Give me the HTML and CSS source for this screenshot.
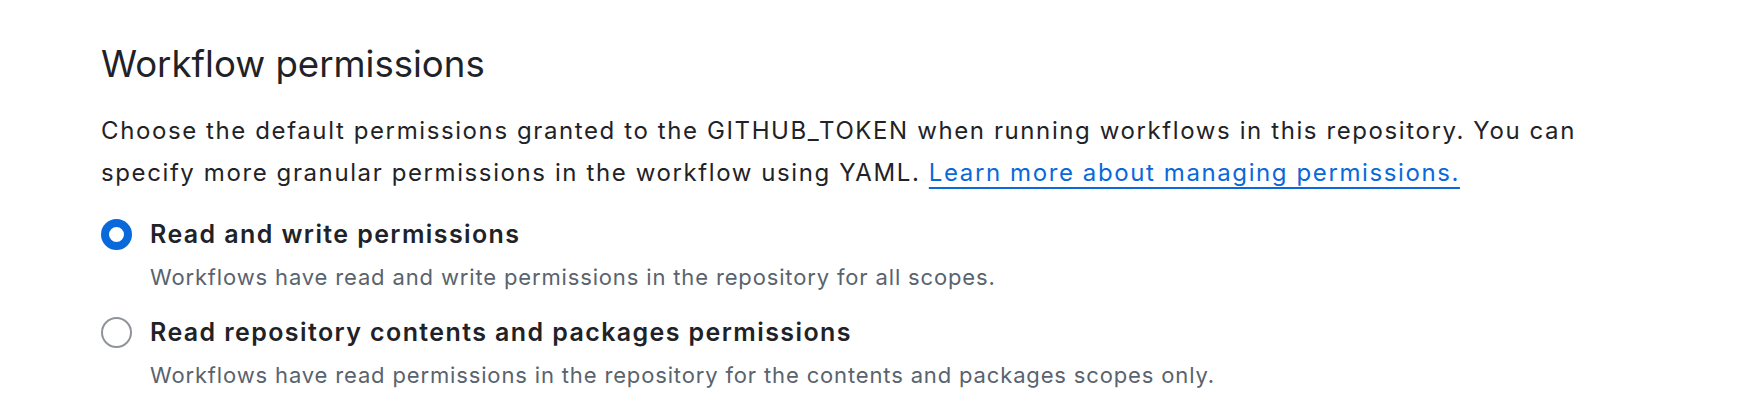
FILE: index.html
```html
<!DOCTYPE html>
<html lang="en">
<head>
<meta charset="utf-8">
<title>Workflow permissions</title>
<link rel="stylesheet" href="styles.css">
</head>
<body>
<section class="panel">
  <h2 class="title">Workflow permissions</h2>
  <p class="intro">Choose the default permissions granted to the GITHUB_TOKEN when running workflows in this repository. You can specify more granular permissions in the workflow using YAML. <a class="link" href="#">Learn more about managing permissions.</a></p>
  <div class="options">
    <label class="option">
      <span class="option-head">
        <input class="radio" type="radio" name="perm" checked>
        <span class="option-label">Read and write permissions</span>
      </span>
      <span class="option-desc">Workflows have read and write permissions in the repository for all scopes.</span>
    </label>
    <label class="option">
      <span class="option-head">
        <input class="radio" type="radio" name="perm">
        <span class="option-label">Read repository contents and packages permissions</span>
      </span>
      <span class="option-desc">Workflows have read permissions in the repository for the contents and packages scopes only.</span>
    </label>
  </div>
</section>
</body>
</html>
```
FILE: styles.css
```css
html, body {
  margin: 0;
  padding: 0;
  background: #ffffff;
}
body {
  font-family: Inter, "Liberation Sans", sans-serif;
  color: #1f2328;
}
.panel {
  padding: 40px 0 0 101px;
  width: 1520px;
}
.title {
  margin: 0;
  font-size: 36.6px;
  line-height: 48px;
  font-weight: 400;
  color: #1f2328;
}
.intro {
  margin: 22px 0 0 0;
  font-size: 24px;
  line-height: 42px;
  letter-spacing: 1.6px;
  color: #1f2328;
}
.link {
  color: #0969da;
  text-decoration: underline;
  text-underline-offset: 6px;
  text-decoration-thickness: 2px;
}
.options {
  margin-top: 22px;
  display: flex;
  flex-direction: column;
  gap: 21px;
}
.option {
  display: flex;
  flex-direction: column;
  gap: 9px;
}
.option-head {
  display: flex;
  align-items: center;
  gap: 18px;
}
.radio {
  appearance: none;
  -webkit-appearance: none;
  margin: 0;
  width: 31px;
  height: 31px;
  border-radius: 50%;
  border: 2px solid #8f949a;
  background: #ffffff;
  box-sizing: border-box;
  flex: none;
}
.radio:checked {
  border: 8px solid #0969da;
}
.option-label {
  font-size: 25px;
  line-height: 36px;
  font-weight: 600;
  letter-spacing: 1.4px;
  color: #1f2328;
}
.option-desc {
  padding-left: 49px;
  font-size: 22px;
  line-height: 32px;
  letter-spacing: 0.85px;
  color: #59636e;
}
```
